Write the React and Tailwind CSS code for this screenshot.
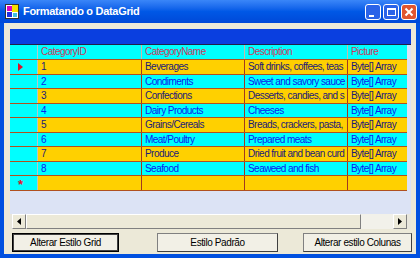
import React from "react";

const rows = [
  { id: "1", name: "Beverages", desc: "Soft drinks, coffees, teas" },
  { id: "2", name: "Condiments", desc: "Sweet and savory sauce" },
  { id: "3", name: "Confections", desc: "Desserts, candies, and s" },
  { id: "4", name: "Dairy Products", desc: "Cheeses" },
  { id: "5", name: "Grains/Cereals", desc: "Breads, crackers, pasta," },
  { id: "6", name: "Meat/Poultry", desc: "Prepared meats" },
  { id: "7", name: "Produce", desc: "Dried fruit and bean curd" },
  { id: "8", name: "Seafood", desc: "Seaweed and fish" },
];

const font = { fontFamily: '"Liberation Sans", Arial, sans-serif' };

const AppIcon = () => (
  <svg width="14" height="15" viewBox="0 0 14 15">
    <rect x="0.5" y="0.5" width="13" height="14" fill="#fff" stroke="#333" />
    <rect x="2" y="2" width="5" height="5" fill="#e000c0" />
    <rect x="7" y="1" width="6" height="7" fill="#f8e000" />
    <rect x="2" y="8" width="5" height="5" fill="#2030e0" />
    <rect x="8" y="9" width="4" height="4" fill="#40c0e0" />
  </svg>
);

const TitleButton = ({ kind }) => (
  <div
    className={`w-[16px] h-[16px] rounded-[3px] border border-white flex items-center justify-center ${
      kind === "close" ? "bg-[#e05530]" : "bg-[#2a63e8]"
    }`}
  >
    {kind === "min" && <div className="w-[5px] h-[2px] bg-white mt-[8px] -ml-[3px]" />}
    {kind === "max" && <div className="w-[9px] h-[8px] border border-white border-t-2" />}
    {kind === "close" && (
      <svg width="10" height="10" viewBox="0 0 10 10">
        <path d="M1.5 1.5 L8.5 8.5 M8.5 1.5 L1.5 8.5" stroke="#fff" strokeWidth="2" />
      </svg>
    )}
  </div>
);

const Button = ({ children, className }) => (
  <button
    className={`h-[19px] bg-[#f2f0e6] border border-[#808080] border-b-[#404040] border-r-[#404040] text-[10px] tracking-[-0.4px] text-black leading-none ${className}`}
    style={font}
  >
    {children}
  </button>
);

export default function App() {
  return (
    <div className="w-[420px] h-[258px] bg-[#0050e0] flex flex-col overflow-hidden" style={font}>
      {/* Title bar */}
      <div className="h-[23px] flex items-center px-[5px] bg-gradient-to-b from-[#3a86f8] via-[#0058e6] to-[#0048d8]">
        <AppIcon />
        <span className="ml-[4px] text-white font-bold text-[11px] tracking-[-0.3px]">
          Formatando o DataGrid
        </span>
        <div className="ml-auto flex gap-[2px] mr-[-2px]">
          <TitleButton kind="min" />
          <TitleButton kind="max" />
          <TitleButton kind="close" />
        </div>
      </div>

      {/* Client area */}
      <div className="flex-1 mx-[4px] mb-[4px] bg-[#ece9d8] flex flex-col">
        {/* DataGrid */}
        <div className="ml-[6px] mt-[6px] w-[401px] h-[200px] flex flex-col bg-[#dce3f5] text-[10px] tracking-[-0.55px]">
          <div className="h-[15px] bg-[#0a3fe0]" />
          <div className="h-[1px] bg-[#20204a]" />
          <div className="flex w-[397px] h-[14px] bg-[#00ffff] text-[#c83a5c] leading-[14px]">
            <div className="w-[28px] border-r border-[#b8c8c8]" />
            <div className="w-[104px] pl-[3px] border-r border-[#c8b8a8]">CategoryID</div>
            <div className="w-[103px] pl-[3px] border-r border-[#c8b8a8]">CategoryName</div>
            <div className="w-[103px] pl-[3px] border-r border-[#c8b8a8]">Description</div>
            <div className="w-[59px] pl-[3px]">Picture</div>
          </div>
          {[...rows, null].map((r, i) => {
            const yellow = i % 2 === 0;
            const text = yellow ? "text-[#1a1a7a]" : "text-[#0a20f0]";
            return (
              <div
                key={i}
                className={`flex w-[397px] h-[14.5px] leading-[13px] border-t border-[#b05020] ${text}`}
              >
                <div className="w-[28px] bg-[#00ffff] border-r border-[#b8c8c8] flex items-center pl-[8px]">
                  {i === 0 && (
                    <svg width="5" height="8" viewBox="0 0 5 8">
                      <path d="M0 0 L5 4 L0 8 Z" fill="#e0102a" />
                    </svg>
                  )}
                  {r === null && <span className="text-[#e0102a] text-[13px] font-bold leading-none mt-[3px]">*</span>}
                </div>
                <div className={`flex w-[369px] ${yellow ? "bg-[#ffd000]" : "bg-[#00ffff]"}`}>
                  <div className="w-[104px] pl-[3px] border-r border-[#a03a20] whitespace-nowrap overflow-hidden">
                    {r && r.id}
                  </div>
                  <div className="w-[103px] pl-[3px] border-r border-[#a03a20] whitespace-nowrap overflow-hidden">
                    {r && r.name}
                  </div>
                  <div className="w-[103px] pl-[3px] border-r border-[#a03a20] whitespace-nowrap overflow-hidden">
                    {r && r.desc}
                  </div>
                  <div className="w-[59px] pl-[3px] whitespace-nowrap overflow-hidden">
                    {r && "Byte[] Array"}
                  </div>
                </div>
              </div>
            );
          })}
          <div className="border-t border-[#b05020] w-[397px]" />
          <div className="flex-1" />
          {/* Horizontal scrollbar */}
          <div className="h-[15px] flex bg-[#e8e6dc]">
            <div className="w-[14px] ml-[2px] bg-[#ece9d8] border border-white border-b-[#808080] border-r-[#808080] flex items-center justify-center">
              <svg width="4" height="7" viewBox="0 0 4 7">
                <path d="M4 0 L0 3.5 L4 7 Z" fill="#000" />
              </svg>
            </div>
            <div className="w-[335px] bg-[#ece9d8] border border-white border-b-[#808080] border-r-[#808080]" />
            <div className="flex-1 bg-[#f2f1ea]" />
            <div className="w-[14px] mr-[4px] bg-[#ece9d8] border border-white border-b-[#808080] border-r-[#808080] flex items-center justify-center">
              <svg width="4" height="7" viewBox="0 0 4 7">
                <path d="M0 0 L4 3.5 L0 7 Z" fill="#000" />
              </svg>
            </div>
          </div>
        </div>

        {/* Buttons */}
        <div className="flex mt-[4px]">
          <Button className="ml-[8px] w-[107px] border-black border-b-black border-r-black outline outline-1 outline-[#404040] -outline-offset-2">
            Alterar Estilo Grid
          </Button>
          <Button className="ml-[38px] w-[121px]">Estilo Padrão</Button>
          <Button className="ml-[25px] w-[109px]">Alterar estilo Colunas</Button>
        </div>
      </div>
    </div>
  );
}
